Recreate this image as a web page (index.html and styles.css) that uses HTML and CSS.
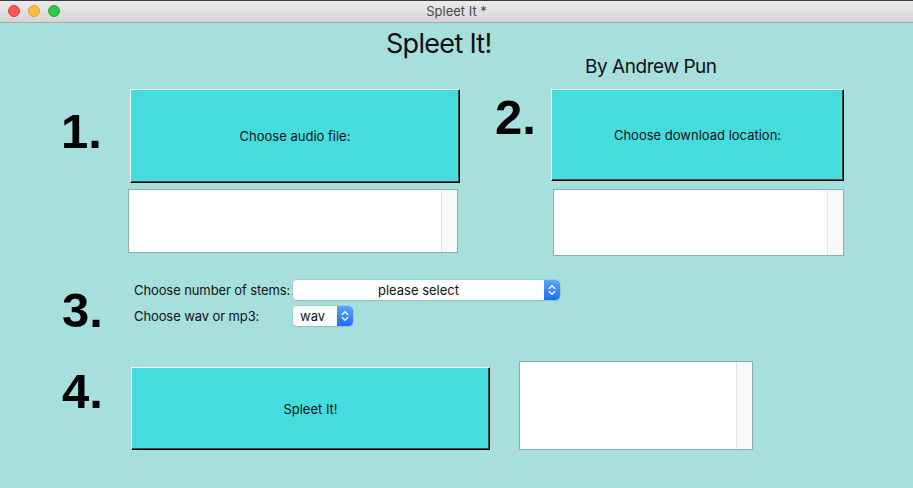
FILE: index.html
```html
<!DOCTYPE html>
<html>
<head>
<meta charset="utf-8">
<link rel="stylesheet" href="styles.css">
</head>
<body>
<div class="window">
  <div class="titlebar">
    <div class="lights">
      <span class="light red"></span>
      <span class="light yellow"></span>
      <span class="light green"></span>
    </div>
    <div class="wtitle">Spleet It *</div>
  </div>
  <div class="content">
    <h1 class="title">Spleet It!</h1>
    <div class="byline">By Andrew Pun</div>

    <div class="row row-12">
      <div class="num num1">1.</div>
      <div class="col col1">
        <button class="btn btn1">Choose audio file:</button>
        <div class="textbox tb1"><div class="sbar"></div></div>
      </div>
      <div class="num num2">2.</div>
      <div class="col col2">
        <button class="btn btn2">Choose download location:</button>
        <div class="textbox tb2"><div class="sbar"></div></div>
      </div>
    </div>

    <div class="row row-3">
      <div class="num num3">3.</div>
      <div class="form">
        <div class="frow">
          <span class="label">Choose number of stems:</span>
          <div class="select sel1"><span class="sval">please select</span><span class="arrows"><svg width="8" height="12" viewBox="0 0 8 12"><path d="M1.2 4.5 L4 1.8 L6.8 4.5 M1.2 7.5 L4 10.2 L6.8 7.5" fill="none" stroke="#fff" stroke-width="1.3" stroke-linecap="round" stroke-linejoin="round"/></svg></span></div>
        </div>
        <div class="frow">
          <span class="label">Choose wav or mp3:</span>
          <div class="select sel2"><span class="sval">wav</span><span class="arrows"><svg width="8" height="12" viewBox="0 0 8 12"><path d="M1.2 4.5 L4 1.8 L6.8 4.5 M1.2 7.5 L4 10.2 L6.8 7.5" fill="none" stroke="#fff" stroke-width="1.3" stroke-linecap="round" stroke-linejoin="round"/></svg></span></div>
        </div>
      </div>
    </div>

    <div class="row row-4">
      <div class="num num4">4.</div>
      <button class="btn btn4">Spleet It!</button>
      <div class="textbox tb3"><div class="sbar"></div></div>
    </div>
  </div>
</div>
</body>
</html>
```
FILE: styles.css
```css
* { box-sizing: border-box; }
html, body { margin: 0; padding: 0; }
body {
  width: 913px;
  height: 488px;
  overflow: hidden;
  font-family: Inter, "Noto Sans", sans-serif;
  background: #a6dfdb;
}
.window {
  width: 913px;
  height: 488px;
  display: flex;
  flex-direction: column;
  border-top: 1px solid #3a3a3a;
}
.titlebar {
  height: 22px;
  flex: none;
  background: linear-gradient(#ebebeb, #d5d5d5);
  border-bottom: 1px solid #a9a9a9;
  position: relative;
  display: flex;
  align-items: center;
  justify-content: center;
}
.lights {
  position: absolute;
  left: 8px;
  top: 4px;
  display: flex;
  gap: 8px;
}
.light {
  width: 12px;
  height: 12px;
  border-radius: 50%;
  display: block;
}
.red { background: #fc5753; border: 0.5px solid #df3e3a; }
.yellow { background: #fdbc40; border: 0.5px solid #de9f2f; }
.green { background: #33c748; border: 0.5px solid #27a936; }
.wtitle {
  font-size: 13px;
  color: #4a4a4a;
  font-family: Inter, sans-serif;
  margin-top: -2px;
}
.content {
  flex: 1;
  background: #a6dfdb;
  position: relative;
}
.title {
  margin: 0;
  margin-top: 7px;
  padding-left: 386px;
  font-size: 27px;
  line-height: 27px;
  font-weight: 400;
  letter-spacing: -0.7px;
  color: #111;
}
.byline {
  padding-left: 585px;
  font-size: 19px;
  line-height: 19px;
  letter-spacing: -0.45px;
  color: #111;
  margin-top: 0;
}
.row { display: flex; }
.row-12 { margin-top: 13px; }
.num {
  font-family: "Liberation Sans", Arial, sans-serif;
  font-weight: 700;
  font-size: 49px;
  line-height: 49px;
  color: #000;
}
.num1 { margin-left: 61px; width: 69px; margin-top: 18px; }
.num2 { margin-left: 35px; width: 56px; margin-top: 4px; }
.col { display: flex; flex-direction: column; }
.btn {
  display: flex;
  align-items: center;
  justify-content: center;
  background: #44dcdc;
  border-top: 1px solid #fff;
  border-left: 1px solid #fff;
  border-right: 1px solid #000;
  border-bottom: 1px solid #000;
  box-shadow: inset -1px -1px 0 #4a4a4a;
  font-family: Inter, sans-serif;
  font-size: 13px;
  color: #141414;
  padding: 0;
  margin: 0;
}
.btn1 { width: 330px; height: 94px; }
.btn2 { width: 293px; height: 92px; }
.textbox {
  background: #fff;
  border: 1px solid #86afae;
  position: relative;
  display: flex;
  justify-content: flex-end;
}
.sbar {
  width: 16px;
  height: 100%;
  background: #f8f8f8;
  border-left: 1px solid #e4e4e4;
}
.tb1 { width: 330px; height: 64px; margin-left: -2px; margin-top: 6px; }
.tb2 { width: 291px; height: 67px; margin-left: 2px; margin-top: 8px; }
.row-3 { margin-top: 24px; }
.num3 { margin-left: 62px; width: 72px; margin-top: 6px; }
.form { display: flex; flex-direction: column; gap: 6px; }
.frow { display: flex; align-items: center; height: 20px; }
.label {
  font-size: 13px;
  letter-spacing: -0.1px;
  color: #141414;
  width: 159px;
}
.select {
  height: 20px;
  background: #fff;
  border-radius: 4px;
  box-shadow: 0 0 0 0.5px #9fb5b5, 0 1px 1px rgba(0,0,0,0.12);
  display: flex;
  align-items: center;
  font-size: 13px;
  color: #141414;
  overflow: hidden;
}
.sel1 { width: 267px; }
.sel1 .sval { flex: 1; text-align: center; }
.sel2 { width: 60px; }
.sel2 .sval { flex: 1; padding-left: 7px; }
.arrows {
  width: 16px;
  height: 20px;
  background: linear-gradient(#5aa5fb, #1d6ef6);
  display: flex;
  align-items: center;
  justify-content: center;
  border-radius: 0 4px 4px 0;
}
.row-4 { margin-top: 26px; align-items: flex-start; }
.num4 { margin-left: 62px; width: 69px; margin-top: 6px; }
.btn4 { width: 359px; height: 83px; margin-top: 6px; }
.tb3 { width: 234px; height: 89px; margin-left: 29px; }
```
